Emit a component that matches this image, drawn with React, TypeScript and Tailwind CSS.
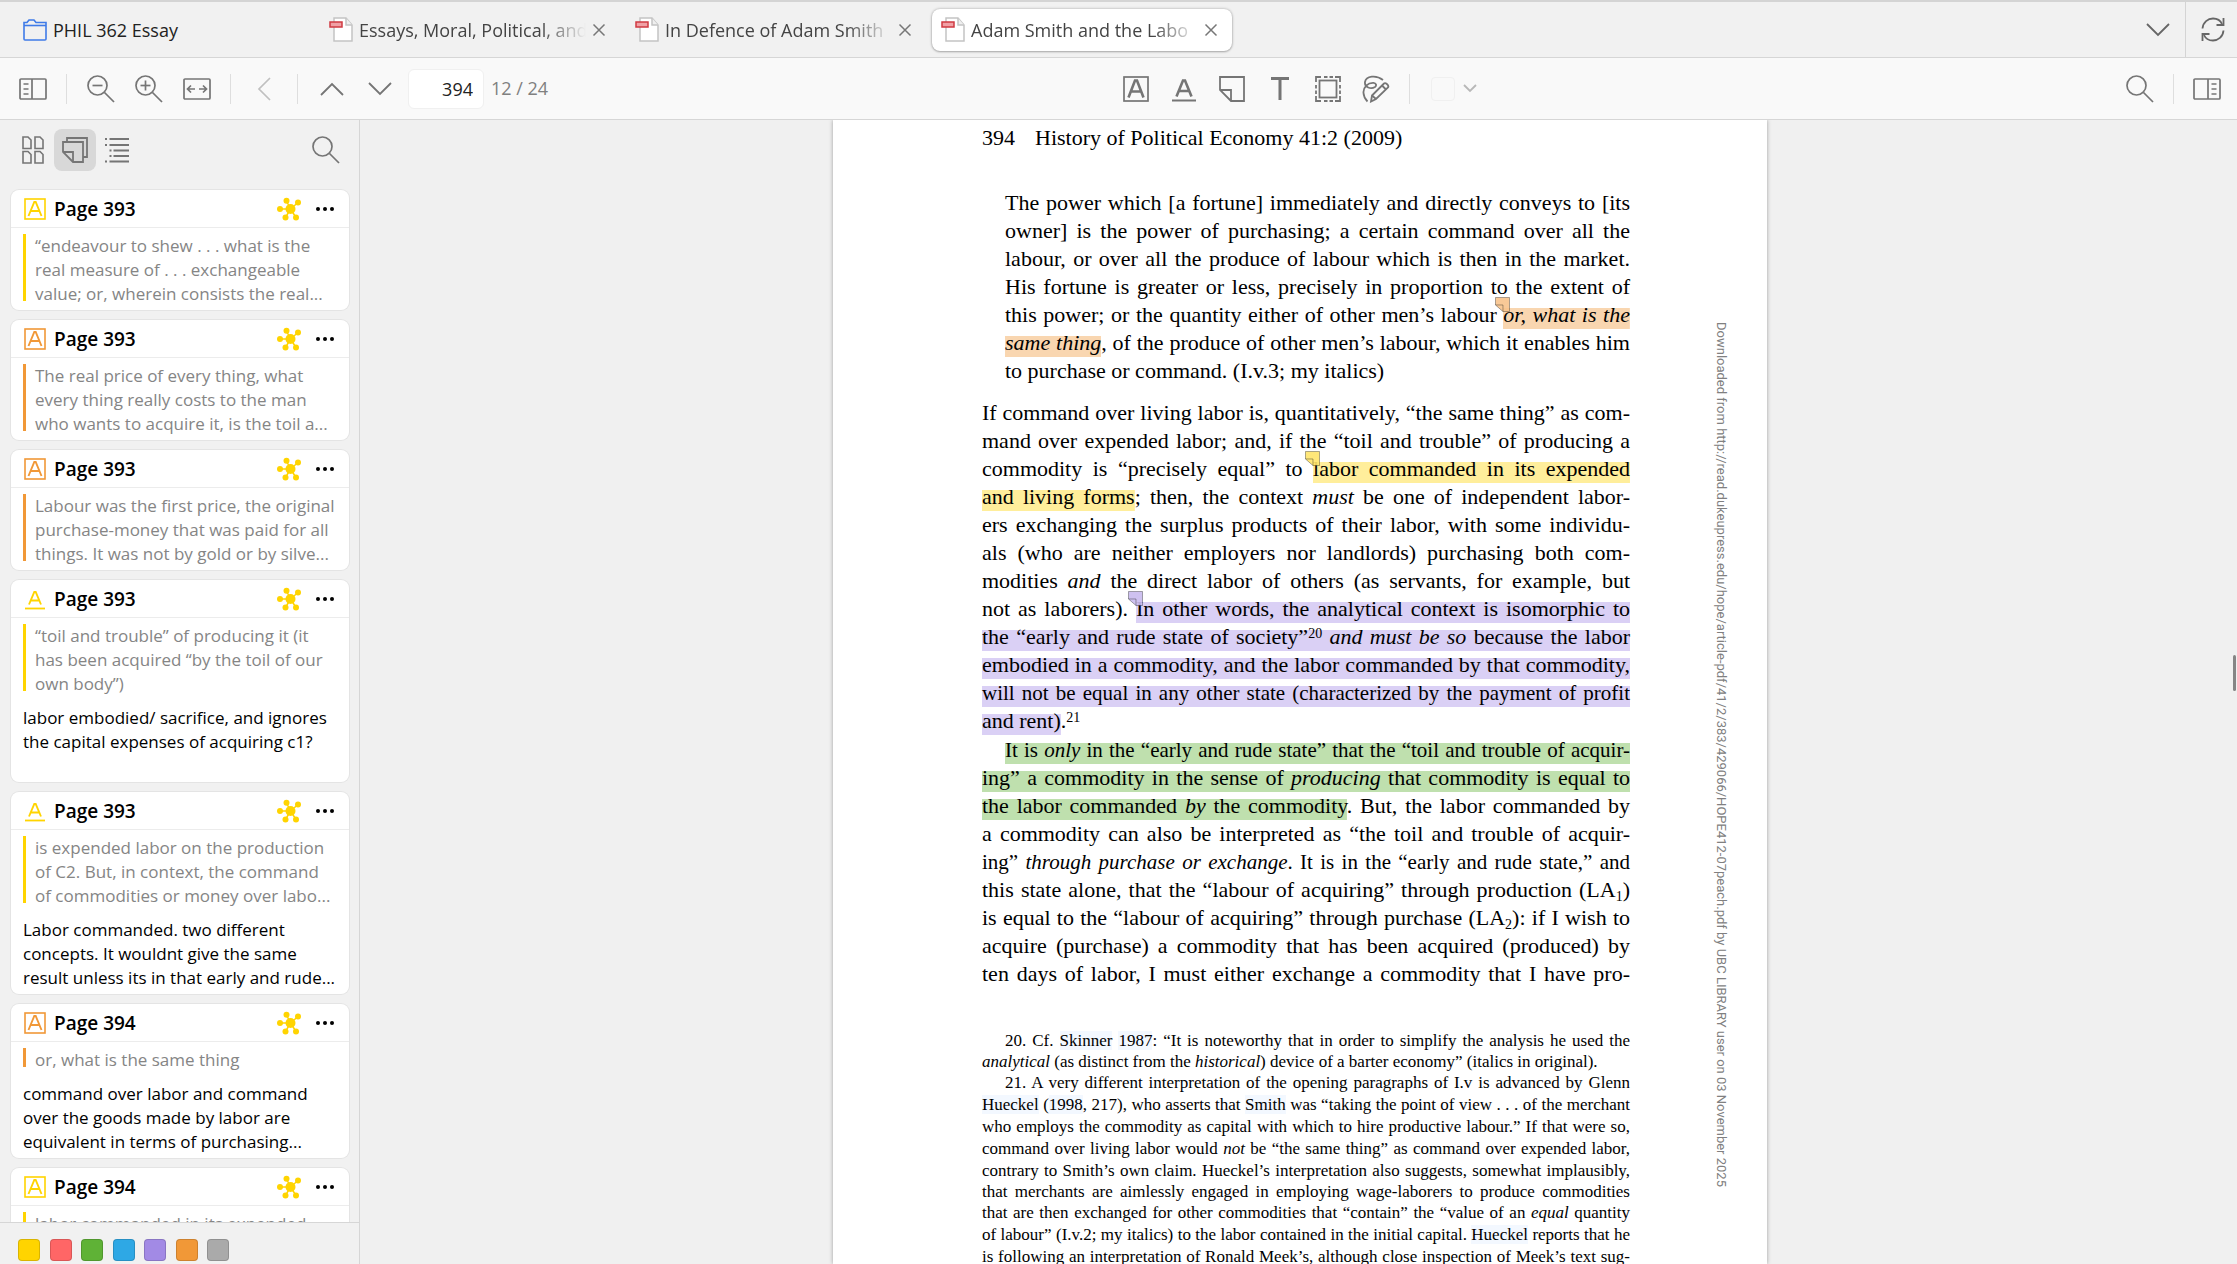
import React from "react";

const UI = "font-['Open_Sans','Noto_Sans',sans-serif]";

/* ---------- icons ---------- */

type IconProps = { className?: string };

function Svg({ w, h, children, className = "", sw = 2 }: { w: number; h: number; children: React.ReactNode; className?: string; sw?: number }) {
  return (
    <svg width={w} height={h} viewBox={`0 0 ${w} ${h}`} fill="none" stroke="currentColor" strokeWidth={sw} className={`shrink-0 ${className}`} aria-hidden="true">
      {children}
    </svg>
  );
}

const FolderIcon = () => (
  <Svg w={24} h={22} className="text-[#3f7be8]" sw={1.6}>
    <path d="M1 20V3.500h3L6 1h5l2 2.500h10V20a1 1 0 0 1-1 1H2a1 1 0 0 1-1-1z" />
    <path d="M1 6.500h22" />
  </Svg>
);

const PdfIcon = () => (
  <svg width="24" height="25" viewBox="0 0 24 25" fill="none" className="shrink-0" aria-hidden="true">
    <path d="M5 1h12l6 7v16H5z" fill="#fff" stroke="#c4c4c4" strokeWidth="1.500" />
    <path d="M17 1v7h6" fill="#efefef" stroke="#c4c4c4" strokeWidth="1.500" />
    <rect x="1" y="5" width="12" height="5" fill="#f0a0a5" stroke="#cf3a42" strokeWidth="1.500" />
  </svg>
);

const CloseIcon = () => (
  <Svg w={14} h={14} sw={1.5}>
    <path d="M1.500 1.500l11 11M12.500 1.500l-11 11" />
  </Svg>
);

const PanelLeft = () => (
  <Svg w={28} h={22} sw={1.7}>
    <rect x="1" y="1" width="26" height="20" rx="1" />
    <path d="M13 1v20M4.500 6h5M4.500 11h5M4.500 16h5" />
  </Svg>
);

const PanelRight = () => (
  <Svg w={28} h={22} sw={1.7}>
    <rect x="1" y="1" width="26" height="20" rx="1" />
    <path d="M15 1v20M18.500 6h5M18.500 11h5M18.500 16h5" />
  </Svg>
);

const Lens = ({ sign }: { sign?: "plus" | "minus" }) => (
  <Svg w={28} h={28} sw={1.7}>
    <circle cx="10.500" cy="10.500" r="9.500" />
    <path d="M17.500 17.500l9.500 9.500" />
    {sign && <path d="M5.500 10.500h10" />}
    {sign === "plus" && <path d="M10.500 5.500v10" />}
  </Svg>
);

const FitWidth = () => (
  <Svg w={28} h={22} sw={1.7}>
    <rect x="1" y="1" width="26" height="20" rx="1" />
    <path d="M4.500 11H12M16 11h7.500M8 7.500L4.500 11 8 14.500M20 7.500l3.500 3.500-3.500 3.500" />
  </Svg>
);

const ChevLeft = () => (
  <Svg w={14} h={24} sw={1.7}>
    <path d="M13 1L2 12l11 11" />
  </Svg>
);
const ChevUp = () => (
  <Svg w={24} h={14} sw={1.8}>
    <path d="M1 13L12 2l11 11" />
  </Svg>
);
const ChevDown = () => (
  <Svg w={24} h={14} sw={1.8}>
    <path d="M1 1l11 11L23 1" />
  </Svg>
);

const HighlightTool = () => (
  <Svg w={26} h={26}>
    <rect x="1" y="1" width="24" height="24" strokeWidth="1.700" />
    <path d="M5.500 21.500L12 4.500h2l6.500 17M8 15.500h10" strokeWidth="2.600" />
  </Svg>
);
const UnderlineTool = () => (
  <Svg w={26} h={26}>
    <path d="M1 24.500h24" strokeWidth="2" />
    <path d="M5.500 20.500L12 4.500h2l6.500 16M8 15h10" strokeWidth="2.600" />
  </Svg>
);
const NoteTool = () => (
  <Svg w={26} h={26} sw={1.8}>
    <path d="M1 1h24v24H12L1 14z" />
    <path d="M1 14h11v11" />
  </Svg>
);
const TextTool = () => (
  <Svg w={26} h={26} sw={3}>
    <path d="M4 2.500h18M13 2.500V24" />
  </Svg>
);
const AreaTool = () => (
  <Svg w={26} h={26} sw={1.8}>
    <rect x="4.500" y="4.500" width="17" height="17" />
    <path d="M1 6V1h5M20 1h5v5M25 20v5h-5M6 25H1v-5M9 1h3.500M14.500 1H18M9 25h3.500M14.500 25H18M1 9v3.500M1 14.500V18M25 9v3.500M25 14.500V18" />
  </Svg>
);
const InkTool = () => (
  <Svg w={28} h={28} sw={1.8}>
    <path d="M21 5C14-.5 4 1 3 7c-.8 5.500 6 7.500 10 5 2-1.500 1-4-1.500-4.200C6 7.500 1 12 1.500 18c.2 3.500 2 6.500 4 8.500" />
    <path d="M10 20.500L22 8.500c1.500-1.300 5.500 2 4 4L14 24l-5 2.500z" />
    <path d="M20 10.500l4 4M10 20.500l4 3.500" />
  </Svg>
);

const Refresh = () => (
  <Svg w={24} h={25} sw={1.8}>
    <path d="M1.500 11.500C2 5 7 1.500 12 1.500c4 0 7.500 2 9 5.500" />
    <path d="M22.500 1v7h-7" />
    <path d="M22.500 13.500c-.5 6.500-5.500 10-10.500 10-4 0-7.500-2-9-5.500" />
    <path d="M1.500 24v-7h7" />
  </Svg>
);

const Thumbs = () => (
  <Svg w={22} h={28} sw={1.6}>
    <path d="M1 1h5L9 4V12.500H1zM13 1h5L21 4V12.500h-8zM1 15.500h5L9 18.500V27H1zM13 15.500h5L21 18.500V27h-8z" />
  </Svg>
);
const Notes = () => (
  <Svg w={26} h={26} sw={1.8}>
    <path d="M5 5V1h20v19h-4" />
    <path d="M1 5h20v20H11L1 15z" />
    <path d="M1 15h10v10" />
  </Svg>
);
const Outline = () => (
  <Svg w={24} h={26} sw={1.8}>
    <path d="M4.500 2H24M4.500 8H24M8.500 13.500H24M8.500 19H24M4.500 24.500H24M0 2h2M0 8h2M4.500 13.500h2M4.500 19h2M0 24.500h2" />
  </Svg>
);

const NetIcon = () => (
  <svg width="24" height="24" viewBox="0 0 24 24" className="shrink-0 text-[#ffd400]" fill="currentColor" stroke="currentColor" aria-hidden="true">
    <path d="M13.500 12L9.500 4M13.500 12L21 5.500M13.500 12H3M13.500 12l-5 8.500M13.500 12L19 20.500" strokeWidth="1.500" />
    <g stroke="none">
      <circle cx="13.500" cy="12" r="5" />
      <circle cx="9.500" cy="3.800" r="3" />
      <circle cx="21" cy="5.500" r="3" />
      <circle cx="3" cy="12" r="3" />
      <circle cx="8.500" cy="20.500" r="3" />
      <circle cx="19" cy="20.500" r="3" />
    </g>
  </svg>
);

const DotsIcon = () => (
  <svg width="20" height="6" viewBox="0 0 20 6" fill="currentColor" aria-hidden="true">
    <circle cx="3" cy="3" r="2" />
    <circle cx="10" cy="3" r="2" />
    <circle cx="17" cy="3" r="2" />
  </svg>
);

const AnnoIcon = ({ kind, className = "" }: IconProps & { kind: "highlight" | "underline" }) =>
  kind === "highlight" ? (
    <Svg w={22} h={22} className={className} sw={1.6}>
      <rect x="1" y="1" width="20" height="20" />
      <path d="M4.500 18L10.300 4h1.400l5.800 14M7 13h8" strokeWidth="1.900" />
    </Svg>
  ) : (
    <Svg w={22} h={22} className={className} sw={1.8}>
      <path d="M1 20.500h20" />
      <path d="M5 16.500L10.300 4h1.400L17 16.500M7 12.500h8" strokeWidth="1.900" />
    </Svg>
  );

/* ---------- data ---------- */

type Anno = { kind: "highlight" | "underline"; tone: "yellow" | "orange"; page: number; quote: string[]; note?: string[] };

const annos: Anno[] = [
  { kind: "highlight", tone: "yellow", page: 393, quote: ["“endeavour to shew . . . what is the", "real measure of . . . exchangeable", "value; or, wherein consists the real..."] },
  { kind: "highlight", tone: "orange", page: 393, quote: ["The real price of every thing, what", "every thing really costs to the man", "who wants to acquire it, is the toil a..."] },
  { kind: "highlight", tone: "orange", page: 393, quote: ["Labour was the first price, the original", "purchase-money that was paid for all", "things. It was not by gold or by silve..."] },
  {
    kind: "underline", tone: "yellow", page: 393,
    quote: ["“toil and trouble” of producing it (it", "has been acquired “by the toil of our", "own body”)"],
    note: ["labor embodied/ sacrifice, and ignores", "the capital expenses of acquiring c1?"],
  },
  {
    kind: "underline", tone: "yellow", page: 393,
    quote: ["is expended labor on the production", "of C2. But, in context, the command", "of commodities or money over labo..."],
    note: ["Labor commanded. two different", "concepts. It wouldnt give the same", "result unless its in that early and rude..."],
  },
  {
    kind: "highlight", tone: "orange", page: 394,
    quote: ["or, what is the same thing"],
    note: ["command over labor and command", "over the goods made by labor are", "equivalent in terms of purchasing..."],
  },
  { kind: "highlight", tone: "yellow", page: 394, quote: ["labor commanded in its expended", "and living forms"] },
];

const textTone = { yellow: "text-[#ffd400]", orange: "text-[#f19837]" };
const bgTone = { yellow: "bg-[#ffd400]", orange: "bg-[#f19837]" };

const swatches: [string, string][] = [
  ["Yellow", "bg-[#ffd400]"],
  ["Red", "bg-[#ff6666]"],
  ["Green", "bg-[#5fb236]"],
  ["Blue", "bg-[#2ea8e5]"],
  ["Purple", "bg-[#a28ae5]"],
  ["Orange", "bg-[#f19837]"],
  ["Gray", "bg-[#aaaaaa]"],
];

/* ---------- chrome ---------- */

function IconButton({ label, className = "", children }: { label: string; className?: string; children: React.ReactNode }) {
  return (
    <button type="button" aria-label={label} className={`flex h-10 w-12 shrink-0 items-center justify-center ${className}`}>
      {children}
    </button>
  );
}

const Rule = ({ className = "" }: IconProps) => <span className={`h-[30px] w-px shrink-0 bg-[#dedede] ${className}`} />;

function Tab({ title, active = false }: { title: string; active?: boolean }) {
  return (
    <div className={`flex h-[42px] w-[300px] shrink-0 items-center rounded-lg pr-[14px] pl-[9px] ${active ? "bg-white shadow-[0_0_3px_rgba(0,0,0,0.3),0_1px_2px_rgba(0,0,0,0.2)]" : ""}`}>
      <PdfIcon />
      <button type="button" className="ml-[6px] min-w-0 flex-1 overflow-hidden text-left text-[18px] leading-7 whitespace-nowrap text-[#444] [mask-image:linear-gradient(to_right,black_80%,transparent)]">
        {title}
      </button>
      <button type="button" aria-label={`Close ${title}`} className="ml-[6px] text-[#777]">
        <CloseIcon />
      </button>
    </div>
  );
}

function TabBar() {
  return (
    <header className="flex h-[58px] shrink-0 items-center border-t-2 border-b border-t-[#d4d4d4] border-b-[#d6d6d6] bg-[#f1f1f1]">
      <button type="button" className="flex w-[320px] shrink-0 items-center gap-[6px] pl-[23px] text-[18px] leading-7 text-[#222]">
        <FolderIcon />
        PHIL 362 Essay
      </button>
      <nav className="flex min-w-0 flex-1 gap-[6px]">
        <Tab title="Essays, Moral, Political, and" />
        <Tab title="In Defence of Adam Smith" />
        <Tab title="Adam Smith and the Labo" active />
      </nav>
      <IconButton label="List all tabs" className="mr-[3px] text-[#666]">
        <ChevDown />
      </IconButton>
      <div className="flex h-full w-[52px] shrink-0 items-center border-l border-[#d4d4d4] pl-[15px] text-[#666]">
        <button type="button" aria-label="Sync">
          <Refresh />
        </button>
      </div>
    </header>
  );
}

function Toolbar() {
  return (
    <div className="flex h-[62px] shrink-0 items-center border-b border-[#d6d6d6] bg-[#f9f9f9] text-[#757575]">
      <div className="flex shrink-0 items-center pl-[9px]">
        <IconButton label="Toggle sidebar"><PanelLeft /></IconButton>
        <Rule className="mr-[10px] ml-[9px]" />
        <IconButton label="Zoom out"><Lens sign="minus" /></IconButton>
        <IconButton label="Zoom in"><Lens sign="plus" /></IconButton>
        <IconButton label="Fit width"><FitWidth /></IconButton>
        <Rule className="mx-[9px]" />
        <IconButton label="Back" className="text-[#c0c0c0]"><ChevLeft /></IconButton>
        <Rule className="mr-[10px] ml-[9px]" />
        <IconButton label="Previous page"><ChevUp /></IconButton>
        <IconButton label="Next page"><ChevDown /></IconButton>
        <input aria-label="Page number" defaultValue="394" className="ml-1 h-10 w-[76px] rounded-md border border-[#f0f0f0] bg-white pr-[10px] text-right text-[18px] text-[#222]" />
        <span className="ml-[7px] text-[18px] text-[#808080]">12 / 24</span>
      </div>
      <div className="flex-[7]" />
      <div className="flex shrink-0 items-center pl-[5px]">
        <IconButton label="Highlight text"><HighlightTool /></IconButton>
        <IconButton label="Underline text"><UnderlineTool /></IconButton>
        <IconButton label="Add note"><NoteTool /></IconButton>
        <IconButton label="Add text"><TextTool /></IconButton>
        <IconButton label="Select area"><AreaTool /></IconButton>
        <IconButton label="Draw"><InkTool /></IconButton>
        <Rule className="mx-[9px]" />
        <button type="button" aria-label="Color" className="flex items-center gap-2 pl-3 text-[#b8b8b8]">
          <span className="size-6 rounded border border-[#f0f0f0]" />
          <Svg w={14} h={9} sw={1.8}><path d="M1 1l6 6 6-6" /></Svg>
        </button>
      </div>
      <div className="flex-[8]" />
      <div className="flex shrink-0 items-center pr-[6px]">
        <IconButton label="Find in document"><Lens /></IconButton>
        <Rule className="mx-[9px]" />
        <IconButton label="Toggle context pane"><PanelRight /></IconButton>
      </div>
    </div>
  );
}

/* ---------- sidebar ---------- */

function AnnoCard({ a }: { a: Anno }) {
  return (
    <li className="shrink-0 rounded-lg bg-white pb-[4px] shadow-[0_0_0_1px_#e4e4e4]">
      <div className="flex h-[38px] items-center border-b border-[#ececec] pr-[14px] pl-[13px]">
        <AnnoIcon kind={a.kind} className={textTone[a.tone]} />
        <span className="ml-[8px] flex-1 text-[19px] leading-6 font-semibold text-black">Page {a.page}</span>
        <NetIcon />
        <button type="button" aria-label="Annotation options" className="ml-[14px] text-black">
          <DotsIcon />
        </button>
      </div>
      <div className="flex gap-[9px] pt-[6px] pl-[12px]">
        <span className={`mb-[5px] w-[3px] shrink-0 ${bgTone[a.tone]}`} />
        <blockquote className="text-[17px] leading-6 whitespace-nowrap text-[#858585]">
          {a.quote.map((l) => <div key={l}>{l}</div>)}
        </blockquote>
      </div>
      {a.note && (
        <div className="mt-[10px] min-h-[72px] pl-[12px] text-[17px] leading-6 whitespace-nowrap text-black">
          {a.note.map((l) => <div key={l}>{l}</div>)}
        </div>
      )}
    </li>
  );
}

function Sidebar() {
  return (
    <aside className="flex w-[360px] shrink-0 flex-col border-r border-[#d6d6d6] bg-[#f1f1f1] text-[#757575]">
      <div className="flex h-[60px] shrink-0 items-center pr-[19px] pl-[22px]">
        <button type="button" aria-label="Thumbnails"><Thumbs /></button>
        <button type="button" aria-label="Annotations" aria-pressed="true" className="ml-[10px] flex size-[42px] items-center justify-center rounded-lg bg-[#d8d8d8]"><Notes /></button>
        <button type="button" aria-label="Outline" className="ml-[9px]"><Outline /></button>
        <button type="button" aria-label="Search annotations" className="ml-auto"><Lens /></button>
      </div>
      <ul className="flex min-h-0 flex-1 flex-col gap-[10px] overflow-hidden pt-[10px] pr-[10px] pl-[11px]">
        {annos.map((a, i) => <AnnoCard key={i} a={a} />)}
      </ul>
      <div className="h-[42px] shrink-0 border-t border-[#d6d6d6] pt-4 pl-[18px]">
        <div className="flex w-[211px] justify-between">
          {swatches.map(([name, bg]) => (
            <button key={name} type="button" aria-label={name} className={`size-[22px] rounded-[4px] border border-black/15 ${bg}`} />
          ))}
        </div>
      </div>
    </aside>
  );
}

/* ---------- document ---------- */

const L = ({ children, last = false, indent = false, tight = false }: { children: React.ReactNode; last?: boolean; indent?: boolean; tight?: boolean }) => (
  <span className={`block whitespace-nowrap ${last ? "" : "[text-align-last:justify]"} ${indent ? "pl-[23px]" : ""} ${tight ? "text-[21px]" : ""}`}>{children}</span>
);

const markTone = {
  orange: "bg-[linear-gradient(#f9d6b0,#f9d6b0)]",
  yellow: "bg-[linear-gradient(#ffee9b,#ffee9b)]",
  purple: "bg-[linear-gradient(#dad0f5,#dad0f5)]",
  green: "bg-[linear-gradient(#bfe0ae,#bfe0ae)]",
};
const pinTone = { orange: "text-[#f9c48c]", yellow: "text-[#ffe56b]", purple: "text-[#c9bbef]", green: "text-[#a9d592]" };

function M({ tone, pin = false, children }: { tone: keyof typeof markTone; pin?: boolean; children: React.ReactNode }) {
  return (
    <mark className={`relative bg-transparent bg-[length:100%_21px] bg-bottom bg-no-repeat pb-[2px] text-inherit ${markTone[tone]}`}>
      {pin && (
        <svg width="15" height="15" viewBox="0 0 16 16" className={`absolute -top-[5px] -left-[8px] opacity-90 ${pinTone[tone]}`} aria-hidden="true">
          <path d="M.5.5h15v15h-7l-8-7z" fill="currentColor" stroke="#00000066" />
          <path d="M.5 8.500h8v7" fill="none" stroke="#00000066" />
        </svg>
      )}
      {children}
    </mark>
  );
}

const Sup = ({ children }: { children: React.ReactNode }) => <sup className="top-[-6px] text-[14px] leading-none">{children}</sup>;
const Sub = ({ children }: { children: React.ReactNode }) => <sub className="text-[14px] leading-none">{children}</sub>;
const Cite = ({ children }: { children: React.ReactNode }) => <a href="#references" className="bg-[#f3f8ff]">{children}</a>;

function Page() {
  return (
    <article className="flex w-[934px] shrink-0 items-start bg-white pl-[149px] font-['Liberation_Serif',serif] text-black shadow-[0_0_4px_rgba(0,0,0,0.35)]">
      <div className="w-[648px] shrink-0 text-[22px] leading-7">
        <div className="flex gap-[20px] pt-[4px]">
          <span>394</span>
          <span>History of Political Economy 41:2 (2009)</span>
        </div>
        <blockquote className="pt-[37px] pl-[23px]">
          <L>The power which [a fortune] immediately and directly conveys to [its</L>
          <L>owner] is the power of purchasing; a certain command over all the</L>
          <L>labour, or over all the produce of labour which is then in the market.</L>
          <L>His fortune is greater or less, precisely in proportion to the extent of</L>
          <L>this power; or the quantity either of other men’s labour <M tone="orange" pin><i>or, what is the</i></M></L>
          <L><M tone="orange"><i>same thing</i></M>, of the produce of other men’s labour, which it enables him</L>
          <L last>to purchase or command. (I.v.3; my italics)</L>
        </blockquote>
        <p className="pt-[14px]">
          <L>If command over living labor is, quantitatively, “the same thing” as com-</L>
          <L>mand over expended labor; and, if the “toil and trouble” of producing a</L>
          <L>commodity is “precisely equal” to <M tone="yellow" pin>labor commanded in its expended</M></L>
          <L><M tone="yellow">and living forms</M>; then, the context <i>must</i> be one of independent labor-</L>
          <L>ers exchanging the surplus products of their labor, with some individu-</L>
          <L>als (who are neither employers nor landlords) purchasing both com-</L>
          <L>modities <i>and</i> the direct labor of others (as servants, for example, but</L>
          <L>not as laborers). <M tone="purple" pin>In other words, the analytical context is isomorphic to</M></L>
          <L><M tone="purple">the “early and rude state of society”<Sup>20</Sup> <i>and must be so</i> because the labor</M></L>
          <L><M tone="purple">embodied in a commodity, and the labor commanded by that commodity,</M></L>
          <L tight><M tone="purple">will not be equal in any other state (characterized by the payment of profit</M></L>
          <L last><M tone="purple">and rent)</M>.<Sup>21</Sup></L>
        </p>
        <p className="pt-px">
          <L indent tight><M tone="green">It is <i>only</i> in the “early and rude state” that the “toil and trouble of acquir-</M></L>
          <L><M tone="green">ing” a commodity in the sense of <i>producing</i> that commodity is equal to</M></L>
          <L><M tone="green">the labor commanded <i>by</i> the commodity</M>. But, the labor commanded by</L>
          <L>a commodity can also be interpreted as “the toil and trouble of acquir-</L>
          <L tight>ing” <i>through purchase or exchange</i>. It is in the “early and rude state,” and</L>
          <L>this state alone, that the “labour of acquiring” through production (LA<Sub>1</Sub>)</L>
          <L>is equal to the “labour of acquiring” through purchase (LA<Sub>2</Sub>): if I wish to</L>
          <L>acquire (purchase) a commodity that has been acquired (produced) by</L>
          <L>ten days of labor, I must either exchange a commodity that I have pro-</L>
        </p>
        <div className="pt-[42px] text-[17px]">
          <p className="leading-[21px]">
            <L indent>20. Cf. <Cite>Skinner</Cite> <Cite>1987</Cite>: “It is noteworthy that in order to simplify the analysis he used the</L>
            <L last><i>analytical</i> (as distinct from the <i>historical</i>) device of a barter economy” (italics in original).</L>
          </p>
          <p className="leading-[22px]">
            <L indent>21. A very different interpretation of the opening paragraphs of I.v is advanced by Glenn</L>
            <L><Cite>Hueckel</Cite> (<Cite>1998</Cite>, 217), who asserts that <Cite>Smith</Cite> was “taking the point of view . . . of the merchant</L>
            <L>who employs the commodity as capital with which to hire productive labour.” If that were so,</L>
            <L>command over living labor would <i>not</i> be “the same thing” as command over expended labor,</L>
          </p>
          <p className="leading-[21px]">
            <L>contrary to Smith’s own claim. Hueckel’s interpretation also suggests, somewhat implausibly,</L>
            <L>that merchants are aimlessly engaged in employing wage-laborers to produce commodities</L>
          </p>
          <p className="leading-[22px]">
            <L>that are then exchanged for other commodities that “contain” the “value of an <i>equal</i> quantity</L>
            <L>of labour” (I.v.2; my italics) to the labor contained in the initial capital. <Cite>Hueckel</Cite> reports that he</L>
            <L>is following an interpretation of Ronald Meek’s, although close inspection of Meek’s text sug-</L>
          </p>
        </div>
      </div>
      <div className="mt-[202px] ml-[81px] font-['Roboto',sans-serif] text-[13px] leading-5 whitespace-nowrap text-[#808080] [writing-mode:vertical-rl]">
        Downloaded from http://read.dukeupress.edu/hope/article-pdf/41/2/383/429066/HOPE412-07peach.pdf by UBC LIBRARY user on 03 November 2025
      </div>
    </article>
  );
}

export default function App() {
  return (
    <div className={`flex h-screen flex-col overflow-hidden bg-[#f0f0f0] ${UI}`}>
      <TabBar />
      <Toolbar />
      <div className="flex min-h-0 flex-1">
        <Sidebar />
        <main className="relative flex min-w-0 flex-1 justify-center overflow-hidden pl-[3px]">
          <Page />
          <div className="absolute top-[535px] right-px h-[36px] w-[3px] rounded-full bg-[#858585]" />
        </main>
      </div>
    </div>
  );
}
